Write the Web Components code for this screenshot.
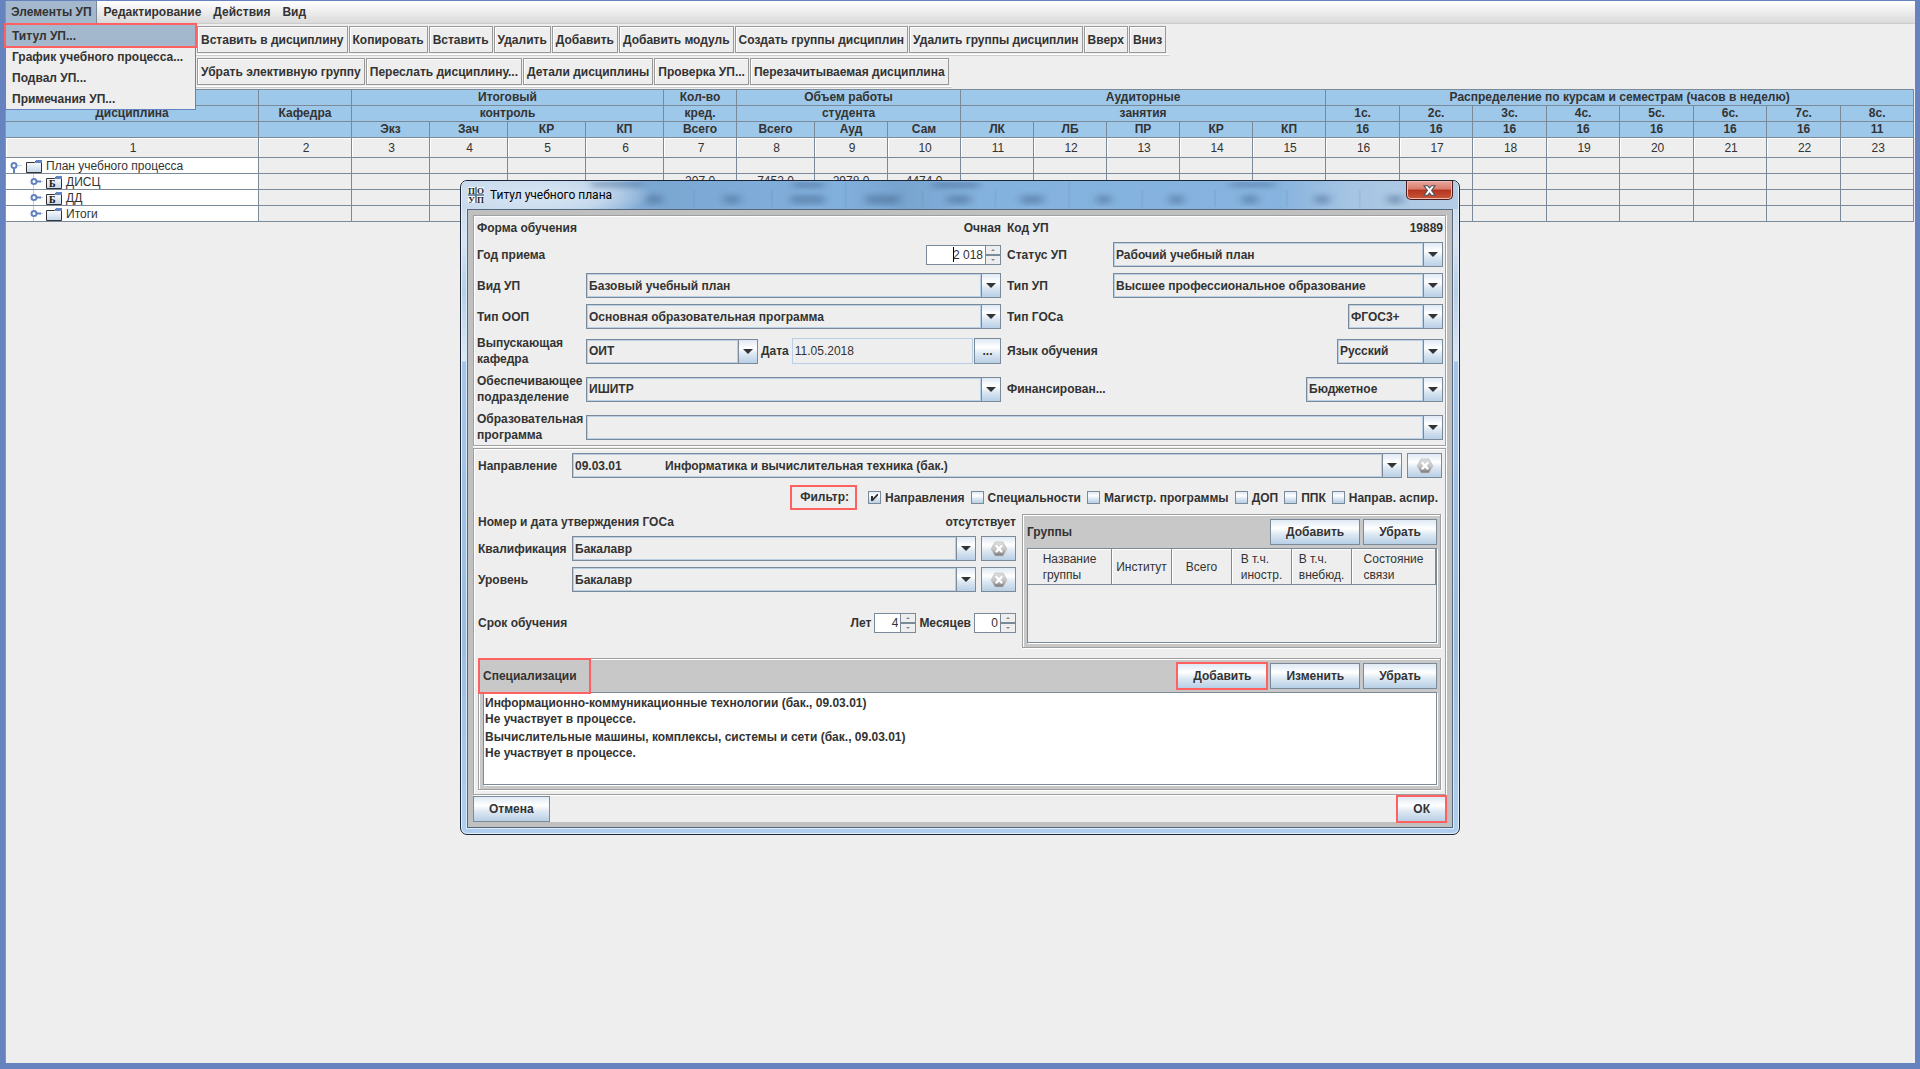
<!DOCTYPE html>
<html lang="ru">
<head>
<meta charset="utf-8">
<title>Учебный план</title>
<style>
  html { --line:#7a8a99; --text:#333; --panel:#eee; --mark:#ff6161; --steel:linear-gradient(#dfe9f4 0,#fff 35%,#dde8f3 60%,#b8cfe5 100%); }
  body { margin:0; background:#eee; color:#333; font:bold 12px/16px "Liberation Sans", Arial, sans-serif; }
</style>
</head>
<body>
<plan-app></plan-app>
<script>
const define = (tag, html, setup) => {
  const template = document.createElement('template');
  template.innerHTML = html;
  customElements.define(tag, class extends HTMLElement {
    constructor() {
      super();
      this.attachShadow({ mode: 'open' }).append(template.content.cloneNode(true));
    }
    connectedCallback() { if (setup) setup(this, this.shadowRoot); }
  });
};

/* Raised push button */
define('jv-button', `
<style>
  :host { display:inline-flex; height:26px; flex:none; }
  button { box-sizing:border-box; height:100%; width:100%; padding:0 15px; border:1px solid var(--line); border-radius:0; background:var(--steel); color:var(--text); font:inherit; white-space:nowrap; display:flex; align-items:center; justify-content:center; }
  :host([marked]) button { outline:2px solid var(--mark); outline-offset:-1px; }
  :host([icon]) { width:35px; height:25px; }
  :host([icon]) button { padding:0; }
  :host([dots]) { width:27px; } :host([dots]) button { padding:0; }
</style>
<button type="button"><slot></slot></button>`, (host, root) => {
  if (host.title) root.querySelector('button').setAttribute('aria-label', host.title);
});

/* Grey hexagon with a cross, used by the clear buttons */
define('clear-icon', `
<style>:host{display:block;height:18px} svg{display:block}</style>
<svg width="18" height="18" viewBox="0 0 18 18">
  <defs><linearGradient id="g" x1="0" y1="0" x2="0" y2="1"><stop offset="0" stop-color="#dedede"/><stop offset=".55" stop-color="#c2c2c2"/><stop offset="1" stop-color="#737373"/></linearGradient></defs>
  <path d="M5 2h8l4 7-4 7H5L1 9z" fill="url(#g)" stroke="#c4c4c4" stroke-width=".8" stroke-linejoin="round"/>
  <path d="M6.500 6l5 5.500M11.500 6l-5 5.500" stroke="#fff" stroke-width="2.400" stroke-linecap="round"/>
</svg>`);

/* Flat toolbar button */
define('tool-button', `
<style>
  :host { display:block; }
  button { box-sizing:border-box; height:27px; padding:0 3px; border:1px solid #999; border-radius:0; box-shadow:inset 1px 1px #fff; background:#eee; color:var(--text); font:inherit; white-space:nowrap; }
</style>
<button type="button"><slot></slot></button>`);

define('tool-bar', `
<style>
  :host { display:flex; box-sizing:border-box; width:fit-content; height:32px; gap:1px; padding:2px 3px 2px 191px; border-bottom:1px solid #ccc; box-shadow:inset 0 -1px #fff; }
</style><slot></slot>`);

/* Drop-down frame: wraps a native select */
define('jv-combo', `
<style>
  :host { display:grid; box-sizing:border-box; height:25px; min-width:0; border:1px solid var(--line); box-shadow:inset 1px 1px #b8cfe5, inset -1px -1px #b8cfe5; }
  ::slotted(select) { grid-area:1/1; width:100%; min-width:0; box-sizing:border-box; padding:0 22px 0 2px; border:0; border-radius:0; background:none; color:var(--text); font:inherit; appearance:none; outline:0; }
  i { grid-area:1/1; justify-self:end; box-sizing:border-box; width:19px; background:var(--steel); border-left:1px solid var(--line); box-shadow:-1px 0 #b8cfe5; pointer-events:none; display:flex; align-items:center; justify-content:center; }
</style>
<slot></slot><i><svg width="10" height="5"><path d="M0 0h10L5 5z" fill="#333"/></svg></i>`);

/* Number spinner: wraps a native input */
define('jv-spinner', `
<style>
  :host { display:flex; box-sizing:border-box; height:20px; flex:none; }
  ::slotted(input) { flex:1; width:0; min-width:0; box-sizing:border-box; border:1px solid var(--line); border-right:0; border-radius:0; padding:0 2px 0 0; background:#fff; color:var(--text); font:inherit; font-weight:normal; text-align:right; outline:0; }
  div { width:16px; display:flex; flex-direction:column; }
  button { flex:1; min-height:0; padding:0; border:1px solid var(--line); border-radius:0; background:#eee; display:flex; align-items:center; justify-content:center; }
</style>
<slot></slot>
<div>
  <button type="button" aria-label="Больше"><svg width="4" height="2"><path d="M0 2h4L2 0z" fill="#7a8a99"/></svg></button>
  <button type="button" aria-label="Меньше"><svg width="4" height="2"><path d="M0 0h4L2 2z" fill="#7a8a99"/></svg></button>
</div>`);

/* Etched group box */
define('etched-panel', `
<style>
  :host { display:block; box-sizing:border-box; margin-right:1px; border:1px solid #a0a0a0; box-shadow:inset 1px 1px #fff, 1px 1px #fff; background:var(--panel); }
  :host([tone="dark"]) { background:#c8c8c8; padding:4px 3px 4px 4px; }
</style><slot></slot>`);

/* Menu bar */
define('app-menu', `
<style>
  :host { display:flex; height:22px; gap:2px; background:linear-gradient(#fff,#dadada); position:relative; z-index:2; }
  button { display:block; box-sizing:border-box; height:22px; padding:0 5px; border:0; border-radius:0; background:none; color:var(--text); font:inherit; white-space:nowrap; }
  .open { position:relative; }
  .open > button { background:#a3b8cc; border-right:1px solid #7a8a99; padding-right:4px; }
  .popup { position:absolute; top:22px; left:-1px; box-sizing:border-box; width:191px; border:1px solid #6382bf; padding-top:1px; background:#eee; }
  .popup button { width:100%; height:21px; padding:0 6px; text-align:left; }
  .popup button:first-child { background:#a3b8cc; outline:2px solid var(--mark); }
</style>
<div class="open"><button type="button" aria-haspopup="true" aria-expanded="true">Элементы УП</button>
  <div class="popup"><button type="button">Титул УП...</button><button type="button">График учебного процесса...</button><button type="button">Подвал УП...</button><button type="button">Примечания УП...</button></div>
</div>
<button type="button">Редактирование</button><button type="button">Действия</button><button type="button">Вид</button>`);

/* Tree cell of the plan */
define('tree-node', `
<style>
  :host { display:flex; height:15px; align-items:stretch; line-height:16px; overflow:hidden; }
  svg { flex:none; display:block; margin-right:4px; }
  .child { display:none; }
  :host([child]) .child { display:block; } :host([child]) .root { display:none; }
  .b { display:none; font:bold 10px "Liberation Serif",serif; fill:#111; } :host([letter]) .b { display:block; }
</style>
<svg class="root" width="36" height="15">
  <defs><linearGradient id="f" x1="0" y1="0" x2="0" y2="1"><stop offset="0" stop-color="#fff"/><stop offset="1" stop-color="#c3d7ea"/></linearGradient></defs>
  <path d="M11 7.500h5" stroke="#b8cfe5"/><circle cx="8" cy="7.500" r="2.500" fill="#fff" stroke="#6382bf" stroke-width="2"/><path d="M8 10v5" stroke="#6382bf" stroke-width="2"/>
  <path d="M20.500 14.500V4.500h8l1.500-1.500h5.500v11.500z" fill="url(#f)" stroke="#333"/><path d="M29 5l1-3h6v3z" fill="#6382bf"/></svg>
<svg class="child" width="56" height="15">
  <defs><linearGradient id="h" x1="0" y1="0" x2="0" y2="1"><stop offset="0" stop-color="#fff"/><stop offset="1" stop-color="#c3d7ea"/></linearGradient></defs>
  <path d="M27.500 0v15" stroke="#b8cfe5"/><circle cx="28" cy="7.500" r="2.500" fill="#fff" stroke="#6382bf" stroke-width="2"/><path d="M31 7.500h4" stroke="#6382bf" stroke-width="2"/><path d="M35 7.500h2" stroke="#b8cfe5"/>
  <path d="M40.500 14.500V4.500h8l1.500-1.500h5.500v11.500z" fill="url(#h)" stroke="#333"/><path d="M49 5l1-3h6v3z" fill="#6382bf"/>
  <text class="b" x="43" y="13">Б</text></svg>
<slot></slot>`);

/* Curriculum grid */
define('plan-table', `
<style>
  :host { display:block; margin-top:1px; }
  table { width:100%; table-layout:fixed; border-collapse:separate; border-spacing:0; border-top:1px solid var(--line); }
  th, td { box-sizing:border-box; height:16px; padding:0; border-right:1px solid var(--line); border-bottom:1px solid var(--line); line-height:15px; text-align:center; overflow:hidden; white-space:nowrap; }
  th { background:#9ec8ea; font-weight:bold; }
  td { background:#eee; font-weight:normal; }
  .num td { height:20px; line-height:18px; padding:1px 0 0 2px; box-shadow:inset 1px 1px #fff; }
  .tree { background:#fff; text-align:left; }
</style>
<table><colgroup></colgroup><thead></thead><tbody></tbody></table>`, (host, root) => {
  const widths = [253,93,78,78,78,78,73,78,73,73,73,73,73,73,73,74,73,74,73,74,73,74,73];
  root.querySelector('colgroup').innerHTML = widths.map(w => `<col style="width:${w}px">`).join('');
  const th = (t, n = 1) => `<th colspan="${n}">${t}</th>`;
  const sems = [1,2,3,4,5,6,7,8];
  root.querySelector('thead').innerHTML =
    `<tr>${th('')}${th('')}${th('Итоговый',4)}${th('Кол-во')}${th('Объем работы',3)}${th('Аудиторные',5)}${th('Распределение по курсам и семестрам (часов в неделю)',8)}</tr>` +
    `<tr>${th('Дисциплина')}${th('Кафедра')}${th('контроль',4)}${th('кред.')}${th('студента',3)}${th('занятия',5)}${sems.map(s => th(s + 'с.')).join('')}</tr>` +
    `<tr>${['','','Экз','Зач','КР','КП','Всего','Всего','Ауд','Сам','ЛК','ЛБ','ПР','КР','КП',16,16,16,16,16,16,16,11].map(t => th(t)).join('')}</tr>`;
  const row = (node, values = {}) => `<tr><td class="tree">${node}</td>${widths.slice(1).map((_, i) => `<td>${values[i + 2] || ''}</td>`).join('')}</tr>`;
  root.querySelector('tbody').innerHTML =
    `<tr class="num">${widths.map((_, i) => `<td>${i + 1}</td>`).join('')}</tr>` +
    row('<tree-node>План учебного процесса</tree-node>') +
    row('<tree-node child letter>ДИСЦ</tree-node>', { 7:'207.0', 8:'7452.0', 9:'2978.0', 10:'4474.0' }) +
    row('<tree-node child letter>ДД</tree-node>') +
    row('<tree-node child>Итоги</tree-node>');
});

/* Glass window frame */
define('glass-window', `
<style>
  :host { display:block; box-sizing:border-box; border:1px solid #1b2533; border-radius:7px; padding:0 6px 6px; box-shadow:inset 0 0 0 1px #e4f0fb; overflow:hidden;
    background:linear-gradient(#c2d6ea 0,#d7e5f2 60px,#b9cfe5 110px,#dce9f6 180px,#a6c5ea 181px,#9dbddf 70%,#b0cef0 100%); }
  header { display:flex; align-items:center; gap:6px; height:28px; margin:0 -5px; padding:0 5px 0 6px; position:relative; color:#000; font:12px/16px Roboto,"Open Sans",sans-serif; box-sizing:border-box; background:radial-gradient(ellipse 110px 26px at 80px 14px,#d9e6f3 0,#d9e6f399 60%,transparent 100%),linear-gradient(90deg,#c3d7eb 0,#a9c7e5 12%,#7aa6d2 19%,#82b0dd 38%,#77a3cf 44%,#84b2de 52%,#86b3df 82%,#a5c4e3 89%,#b5cde5 100%); }
  .haze { position:absolute; inset:1px 0 2px; width:100%; height:25px; }
  .logo { position:relative; flex:none; font:bold 9px "Liberation Serif",serif; }
  .title { position:relative; flex:1; }
  button { position:relative; align-self:flex-start; width:47px; height:19px; padding:0; border:1px solid #4b1a1c; border-top:0; border-radius:0 0 5px 5px; box-shadow:inset 0 0 0 1px #f3b9ac; background:linear-gradient(#e7a89e 0,#d97c6d 45%,#b5331f 50%,#c8583a 100%); display:flex; align-items:center; justify-content:center; }
  .client { box-sizing:border-box; border:1px solid #56677b; padding:5px; background:#c0c0c0; box-shadow:0 0 0 1px #d9eafa; }
</style>
<header>
  <svg class="haze" viewBox="0 0 998 25" preserveAspectRatio="none" aria-hidden="true">
    <defs><filter id="b" x="-50%" y="-80%" width="200%" height="260%"><feGaussianBlur stdDeviation="4 2.500"/></filter></defs>
    <g fill="#3d5f85" opacity=".42" filter="url(#b)">
      <rect x="130" y="0" width="50" height="5"/><rect x="332" y="0" width="30" height="6"/><rect x="472" y="0" width="46" height="6"/><rect x="770" y="0" width="44" height="5"/>
      <rect x="185" y="13" width="15" height="9"/><rect x="263" y="13" width="15" height="9"/><rect x="330" y="13" width="33" height="9"/><rect x="405" y="13" width="33" height="9"/><rect x="487" y="13" width="22" height="9"/><rect x="560" y="13" width="22" height="9"/><rect x="636" y="13" width="14" height="9"/><rect x="709" y="13" width="14" height="9"/><rect x="782" y="13" width="15" height="9"/><rect x="855" y="13" width="14" height="9"/><rect x="928" y="13" width="14" height="9"/>
    </g>
    <path d="M232.500 8v17M310.500 8v17M384.500 0v25M461.500 8v17M534.500 8v17M608.500 0v25M681.500 8v17M754.500 8v17M826.500 8v17M899.500 8v17" stroke="#55799f" opacity=".12" stroke-width="2" fill="none"/>
  </svg>
  <svg class="logo" width="16" height="16" viewBox="0 0 16 16" aria-hidden="true"><path d="M0 0h16v16H0z" fill="#f4f6f8"/><path d="M8 0v16M0 8h16" stroke="#4f7089" stroke-width="1.500"/>
    <g fill="#1d2a36" text-anchor="middle"><text x="3.500" y="6.500">П</text><text x="12.500" y="6.500">О</text><text x="3.500" y="15.500">У</text><text x="12.500" y="15.500">П</text></g></svg>
  <span class="title"><slot name="title"></slot></span>
  <button type="button" aria-label="Закрыть"><svg width="13" height="11" viewBox="0 0 13 11"><path d="M1 .700h3.600L6.500 3 8.400.7H12L8.600 5.500l3.400 4.800H8.400L6.500 8l-1.900 2.300H1l3.400-4.800z" fill="#fff" stroke="#4a4d5c" stroke-width="1.100"/></svg></button>
</header>
<div class="client"><slot></slot></div>`);

/* Plan title form */
define('title-form', `
<style>
  :host { display:block; background:#eee; }
  label, .l { white-space:nowrap; }
  .top { display:grid; grid-template-columns:103px 415px 100px 1fr; column-gap:6px; row-gap:6px; align-items:center; padding:5px 2px 2px 3px; }
  .line { min-height:15px; line-height:15px; }
  .end { justify-self:end; }
  .wide { grid-column:2 / -1; }
  .year { width:75px; }
  .dept { display:flex; align-items:center; gap:3px; }
  .dept jv-combo { width:172px; }
  .date { flex:1; min-width:0; box-sizing:border-box; height:26px; border:1px solid #b8cfe5; border-radius:0; padding:0 2px; background:#eee; color:var(--text); font:inherit; font-weight:normal; }
  .dept jv-button { margin-left:-2px; }
  .p2 { margin-top:2px; }
  .body { padding:4px 3px 4px 4px; display:flex; flex-direction:column; }
  .dir { display:grid; grid-template-columns:94px 1fr 35px; column-gap:5px; align-items:center; }
  .dir > label { margin-right:-5px; }
  .dir jv-combo { margin-left:-5px; }
  .filter { display:flex; align-items:center; justify-content:flex-end; gap:6px; height:25px; margin:7px 4px 4px 0; }
  .filter b { box-sizing:border-box; height:25px; line-height:21px; padding:0 6px 0 8px; margin-right:5px; border:2px solid var(--mark); }
  .filter label { display:flex; align-items:center; gap:4px; }
  input[type=checkbox] { appearance:none; box-sizing:border-box; width:13px; height:13px; margin:0; border:1px solid var(--line); border-radius:0; background:var(--steel); }
  input[type=checkbox]:checked::before { content:""; display:block; width:7px; height:7px; margin:2px; background:#333; clip-path:polygon(0 30%,28% 30%,28% 60%,85% 0,100% 0,100% 20%,28% 100%,0 100%); }
  .mid { display:grid; grid-template-columns:538px 1fr; column-gap:6px; }
  .left { display:grid; grid-template-columns:94px 1fr 35px; column-gap:5px; row-gap:6px; align-items:center; align-content:start; }
  .left > label { margin-right:-5px; }
  .left jv-combo { margin-left:-5px; }
  .row { grid-column:1 / -1; display:flex; justify-content:space-between; align-items:center; height:16px; }
  .term { height:20px; margin-top:15px; gap:3px; }
  .term .l { flex:1; }
  .y { width:42px; }
  .head { display:flex; align-items:center; gap:3px; height:26px; margin-bottom:3px; }
  .head > :first-child { margin-right:auto; }
  .groups { box-sizing:border-box; height:95px; border:1px solid var(--line); box-shadow:1px 1px #fff; background:#eee; }
  table { width:100%; table-layout:fixed; border-collapse:separate; border-spacing:0; }
  th { box-sizing:border-box; height:36px; padding:0; font-weight:normal; border-right:1px solid var(--line); border-bottom:1px solid var(--line); box-shadow:inset 1px 1px #fff; text-align:center; white-space:nowrap; }
  th span { display:inline-block; text-align:left; vertical-align:middle; }
  .spec { margin-top:10px; }
  .mark { position:relative; }
  .mark::before { content:""; position:absolute; inset:-10px -14px -10px -5px; border:2px solid var(--mark); }
  ul { box-sizing:border-box; height:93px; margin:0; padding:2px 1px; list-style:none; border:1px solid var(--line); box-shadow:1px 1px #fff; background:#fff; }
  li + li { margin-top:2px; }
  footer { display:flex; justify-content:space-between; margin-top:1px; padding-right:1px; }
</style>
<etched-panel><div class="top">
  <span class="line">Форма обучения</span><span class="line end">Очная</span><span class="line">Код УП</span><span class="line end">19889</span>
  <label for="year">Год приема</label><jv-spinner class="year end"><input id="year" value="2 018" style="background:linear-gradient(#000,#000) no-repeat right 31px center / 1px 15px #fff"></jv-spinner>
  <label for="status">Статус УП</label><jv-combo><select id="status"><option>Рабочий учебный план</option></select></jv-combo>
  <label for="kind">Вид УП</label><jv-combo><select id="kind"><option>Базовый учебный план</option></select></jv-combo>
  <label for="type">Тип УП</label><jv-combo><select id="type"><option>Высшее профессиональное образование</option></select></jv-combo>
  <label for="oop">Тип ООП</label><jv-combo><select id="oop"><option>Основная образовательная программа</option></select></jv-combo>
  <label for="gos">Тип ГОСа</label><jv-combo class="end" style="width:95px"><select id="gos"><option>ФГОС3+</option></select></jv-combo>
  <label for="dept">Выпускающая<br>кафедра</label>
  <div class="dept"><jv-combo><select id="dept"><option>ОИТ</option></select></jv-combo><label for="date">Дата</label><input class="date" id="date" value="11.05.2018"><jv-button dots title="Выбрать дату">...</jv-button></div>
  <label for="lang">Язык обучения</label><jv-combo class="end" style="width:106px"><select id="lang"><option>Русский</option></select></jv-combo>
  <label for="unit">Обеспечивающее<br>подразделение</label><jv-combo><select id="unit"><option>ИШИТР</option></select></jv-combo>
  <label for="fin">Финансирован...</label><jv-combo class="end" style="width:137px"><select id="fin"><option>Бюджетное</option></select></jv-combo>
  <label for="prog">Образовательная<br>программа</label><jv-combo class="wide"><select id="prog"><option></option></select></jv-combo>
</div></etched-panel>
<etched-panel class="p2"><div class="body">
  <div class="dir"><label for="dir">Направление</label><jv-combo><select id="dir"><option>09.03.01&nbsp;&nbsp;&nbsp;&nbsp;&nbsp;&nbsp;&nbsp;&nbsp;&nbsp;&nbsp;&nbsp;&nbsp;&nbsp;Информатика и вычислительная техника (бак.)</option></select></jv-combo><jv-button icon title="Очистить направление"><clear-icon></clear-icon></jv-button></div>
  <div class="filter"><b>Фильтр:</b>
    <label><input type="checkbox" checked>Направления</label><label><input type="checkbox">Специальности</label><label><input type="checkbox">Магистр. программы</label><label><input type="checkbox">ДОП</label><label><input type="checkbox">ППК</label><label><input type="checkbox">Направ. аспир.</label></div>
  <div class="mid">
    <div class="left">
      <div class="row"><span>Номер и дата утверждения ГОСа</span><span>отсутствует</span></div>
      <label for="qual">Квалификация</label><jv-combo><select id="qual"><option>Бакалавр</option></select></jv-combo><jv-button icon title="Очистить квалификацию"><clear-icon></clear-icon></jv-button>
      <label for="lvl">Уровень</label><jv-combo><select id="lvl"><option>Бакалавр</option></select></jv-combo><jv-button icon title="Очистить уровень"><clear-icon></clear-icon></jv-button>
      <div class="row term"><span class="l">Срок обучения</span><label for="yrs">Лет</label><jv-spinner class="y"><input id="yrs" value="4"></jv-spinner><label for="mon">Месяцев</label><jv-spinner class="y"><input id="mon" value="0"></jv-spinner></div>
    </div>
    <etched-panel tone="dark">
      <div class="head"><span>Группы</span><jv-button>Добавить</jv-button><jv-button>Убрать</jv-button></div>
      <div class="groups"><table><colgroup><col style="width:84px"><col style="width:60px"><col style="width:60px"><col style="width:60px"><col style="width:60px"><col></colgroup>
        <tr><th><span>Название<br>группы</span></th><th>Институт</th><th>Всего</th><th><span>В т.ч.<br>иностр.</span></th><th><span>В т.ч.<br>внебюд.</span></th><th><span>Состояние<br>связи</span></th></tr></table></div>
    </etched-panel>
  </div>
  <etched-panel tone="dark" class="spec">
    <div class="head"><span class="mark">Специализации</span><jv-button marked>Добавить</jv-button><jv-button>Изменить</jv-button><jv-button>Убрать</jv-button></div>
    <ul><li>Информационно-коммуникационные технологии (бак., 09.03.01)<br>Не участвует в процессе.</li><li>Вычислительные машины, комплексы, системы и сети (бак., 09.03.01)<br>Не участвует в процессе.</li></ul>
  </etched-panel>
</div></etched-panel>
<footer><jv-button>Отмена</jv-button><jv-button marked>ОК</jv-button></footer>`);

/* Application window */
define('plan-app', `
<style>
  :host { display:block; box-sizing:border-box; min-height:100vh; position:relative; border:solid #6682bf; border-width:1px 5px 6px; background:#eee; }
  main { border-left:1px solid #8c93a3; padding-right:1px; box-sizing:border-box; min-height:calc(100vh - 7px); }
  app-menu { margin-right:-1px; border-bottom:1px solid #ccc; }
  glass-window { position:absolute; z-index:3; top:179px; left:0; right:0; width:1000px; margin:0 auto; }
</style>
<main>
  <app-menu></app-menu>
  <tool-bar><tool-button>Вставить в дисциплину</tool-button><tool-button>Копировать</tool-button><tool-button>Вставить</tool-button><tool-button>Удалить</tool-button><tool-button>Добавить</tool-button><tool-button>Добавить модуль</tool-button><tool-button>Создать группы дисциплин</tool-button><tool-button>Удалить группы дисциплин</tool-button><tool-button>Вверх</tool-button><tool-button>Вниз</tool-button></tool-bar>
  <tool-bar><tool-button>Убрать элективную группу</tool-button><tool-button>Переслать дисциплину...</tool-button><tool-button>Детали дисциплины</tool-button><tool-button>Проверка УП...</tool-button><tool-button>Перезачитываемая дисциплина</tool-button></tool-bar>
  <plan-table></plan-table>
</main>
<glass-window role="dialog" aria-label="Титул учебного плана"><span slot="title">Титул учебного плана</span><title-form></title-form></glass-window>`);
</script>
</body>
</html>
